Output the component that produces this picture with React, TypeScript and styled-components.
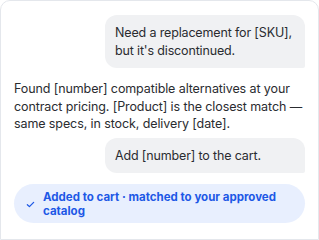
import React from "react";
import styled, { createGlobalStyle } from "styled-components";

const Global = createGlobalStyle`
  html, body { margin: 0; padding: 0; background: #ffffff; }
  body { font-family: "Inter", "Noto Sans", sans-serif; }
`;

const Card = styled.div`
  box-sizing: border-box;
  width: 319px;
  height: 240px;
  border: 1px solid #e4e7ec;
  border-radius: 10px 10px 0 0;
  background: #ffffff;
  padding: 14px 13px 0 13px;
  display: flex;
  flex-direction: column;
  color: #2a2c30;
`;

const UserBubble = styled.div<{ $mt?: number }>`
  align-self: flex-end;
  width: 200px;
  box-sizing: border-box;
  margin-top: ${(p) => p.$mt ?? 0}px;
  background: #f0f1f3;
  border-radius: 12px 12px 2px 12px;
  padding: 9px 10px;
  font-size: 12.5px;
  line-height: 17.5px;
  letter-spacing: -0.15px;
`;

const Reply = styled.p`
  margin: 12px 0 0 0;
  font-size: 12.5px;
  line-height: 17.5px;
  letter-spacing: -0.1px;
`;

const Badge = styled.div`
  margin-top: 11px;
  display: flex;
  align-items: center;
  gap: 8px;
  background: #e8effe;
  border-radius: 20px;
  padding: 6px 14px 5px 12px;
  color: #1d58e6;
  font-weight: 700;
  font-size: 11.5px;
  line-height: 14px;
`;

const Check = styled.svg`
  flex: none;
  width: 9px;
  height: 9px;
`;

export default function App() {
  return (
    <>
      <Global />
      <Card>
        <UserBubble>Need a replacement for [SKU], but it's discontinued.</UserBubble>
        <Reply>
          Found [number] compatible alternatives at your contract pricing. [Product] is the closest match — same specs, in stock, delivery [date].
        </Reply>
        <UserBubble $mt={5}>Add [number] to the cart.</UserBubble>
        <Badge>
          <Check viewBox="0 0 10 10">
            <path d="M1.5 5.2 L3.8 7.4 L8.5 2.6" fill="none" stroke="#1d58e6" strokeWidth="1.4" strokeLinecap="round" strokeLinejoin="round" />
          </Check>
          <span>Added to cart · matched to your approved catalog</span>
        </Badge>
      </Card>
    </>
  );
}
